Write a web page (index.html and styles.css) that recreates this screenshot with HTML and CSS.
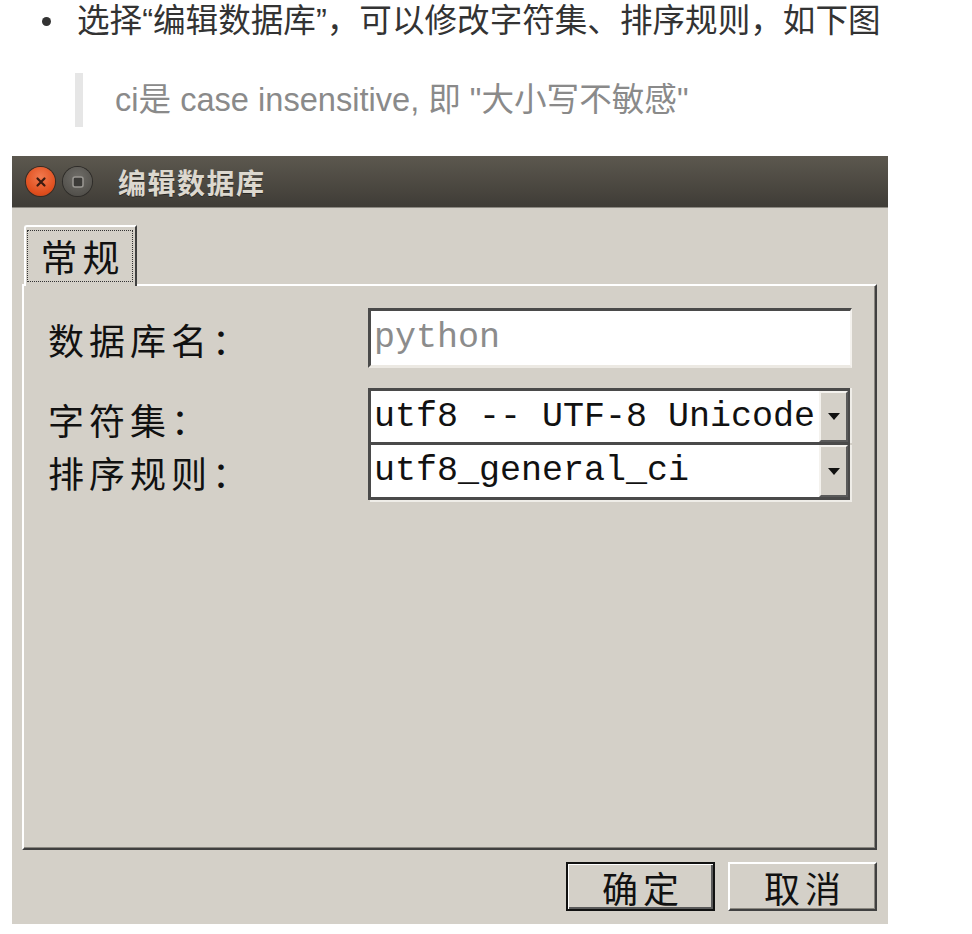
FILE: index.html
```html
<!DOCTYPE html>
<html lang="zh-CN">
<head>
<meta charset="utf-8">
<title>编辑数据库</title>
<link rel="stylesheet" href="styles.css">
</head>
<body>
<div class="lead">
  <span class="dot"></span>
  <span class="lead-text">选择“编辑数据库”，可以修改字符集、排序规则，如下图</span>
</div>
<blockquote class="quote">ci是 case insensitive, 即 "大小写不敏感"</blockquote>

<div class="dialog">
  <div class="titlebar">
    <span class="wbtn wbtn-close">
      <svg width="14" height="14" viewBox="0 0 14 14"><path d="M3.5 3.5 L10.5 10.5 M10.5 3.5 L3.5 10.5" stroke="#3a1a10" stroke-width="2.2" stroke-linecap="round"/></svg>
    </span>
    <span class="wbtn wbtn-max">
      <svg width="14" height="14" viewBox="0 0 14 14"><rect x="2" y="2" width="10" height="10" rx="2" fill="#3c3b38" stroke="#9a9893" stroke-width="1.5"/></svg>
    </span>
    <span class="title">编辑数据库</span>
  </div>
  <div class="dlg-body">
    <div class="tabs">
      <div class="tab"><span class="tab-focus">常规</span></div>
    </div>
    <div class="panel">
      <div class="form">
        <div class="label row1">数据库名：</div>
        <div class="field input row1"><span class="ph">python</span></div>
        <div class="label row2">字符集：</div>
        <div class="field combo row2">
          <span class="combo-text">utf8 -- UTF-8 Unicode</span>
          <span class="drop"><span class="tri"></span></span>
        </div>
        <div class="label row3">排序规则：</div>
        <div class="field combo combo2 row3">
          <span class="combo-text">utf8_general_ci</span>
          <span class="drop"><span class="tri"></span></span>
        </div>
      </div>
    </div>
    <div class="buttons">
      <div class="btn btn-default"><span class="btn-inner">确定</span></div>
      <div class="btn"><span class="btn-inner">取消</span></div>
    </div>
  </div>
</div>
</body>
</html>
```

FILE: styles.css
```css
html, body {
  margin: 0;
  padding: 0;
  background: #ffffff;
}
body {
  width: 972px;
  height: 934px;
  overflow: hidden;
  font-family: "Liberation Sans", "Noto Sans CJK SC", sans-serif;
}

.lead {
  display: flex;
  align-items: center;
  height: 42px;
  color: #333333;
  font-size: 32.6px;
}
.dot {
  width: 9px;
  height: 9px;
  border-radius: 50%;
  background: #333333;
  margin-left: 42px;
  margin-right: 26px;
}
.lead-text {
  line-height: 42px;
  white-space: nowrap;
}

.quote {
  margin: 31px 0 0 75px;
  padding: 0 0 0 32px;
  border-left: 8px solid #e6e6e6;
  height: 54px;
  line-height: 54px;
  font-size: 32.6px;
  color: #8a8a8a;
  white-space: nowrap;
}

.dialog {
  margin: 29px 0 0 12px;
  width: 876px;
  height: 768px;
  background: #d4d0c8;
  display: flex;
  flex-direction: column;
}

.titlebar {
  height: 51px;
  border-bottom: 1px solid #8c8982;
  background: linear-gradient(#5c584f, #3f3c36);
  display: flex;
  align-items: center;
  padding-left: 14px;
  box-sizing: content-box;
}
.wbtn {
  width: 29px;
  height: 29px;
  border-radius: 50%;
  display: flex;
  align-items: center;
  justify-content: center;
}
.wbtn-close {
  background: radial-gradient(circle at 50% 35%, #f27a4f, #df4d1c 70%, #b33d14);
  box-shadow: 0 0 0 1px #3a2a22;
}
.wbtn-max {
  margin-left: 8px;
  background: radial-gradient(circle at 50% 35%, #6f6d68, #55534e 70%, #45433f);
  box-shadow: 0 0 0 1px #2e2c29;
}
.title {
  margin-left: 26px;
  font-family: "Noto Sans CJK SC", sans-serif;
  font-weight: 700;
  font-size: 28px;
  color: #dcd8cf;
  letter-spacing: 1.5px;
  text-shadow: 0 1px 0 #2a2825;
}

.dlg-body {
  flex: 1;
  display: flex;
  flex-direction: column;
  padding: 17px 11px 13px 10px;
}

.tabs {
  display: flex;
  padding-left: 2px;
  height: 59px;
  position: relative;
  z-index: 1;
}
.tab {
  width: 113px;
  height: 61px;
  background: #d4d0c8;
  border-top: 2px solid #ffffff;
  border-left: 2px solid #ffffff;
  border-right: 2px solid #404040;
  border-top-left-radius: 3px;
  box-sizing: border-box;
  padding: 3px 2px 3px 1px;
}
.tab-focus {
  display: flex;
  align-items: center;
  justify-content: center;
  height: 52px;
  border: 1px dotted #333333;
  font-family: "Noto Sans CJK SC", sans-serif;
  font-size: 37px;
  letter-spacing: 5px;
  padding-left: 5px;
  color: #111111;
  box-sizing: border-box;
}

.panel {
  height: 566px;
  box-sizing: border-box;
  border-top: 2px solid #ffffff;
  border-left: 2px solid #ffffff;
  border-right: 2px solid #404040;
  border-bottom: 2px solid #404040;
  box-shadow: inset -1px -1px 0 #8a8780;
  padding: 22px 23px 0 24px;
}

.form {
  display: grid;
  grid-template-columns: 320px 484px;
  grid-template-rows: 60px 20px 55px 57px;
}
.row1 { grid-row: 1; }
.row2 { grid-row: 3; }
.row3 { grid-row: 4; }

.label {
  grid-column: 1;
  display: flex;
  align-items: center;
  font-family: "Noto Sans CJK SC", sans-serif;
  font-size: 36px;
  letter-spacing: 5px;
  color: #111111;
  white-space: nowrap;
}
.row1.label { padding-top: 2px; }
.row2.label { padding-top: 6px; }

.field {
  grid-column: 2;
  box-sizing: border-box;
  background: #ffffff;
  font-family: "Liberation Mono", monospace;
  font-size: 35px;
  display: flex;
  align-items: center;
  overflow: hidden;
  white-space: nowrap;
}
.input {
  border-top: 3px solid #4a4a4a;
  border-left: 3px solid #4a4a4a;
  border-right: 2px solid #f4f2ee;
  border-bottom: 3px solid #ece9e3;
  padding-left: 3px;
}
.ph {
  color: #8c8c8c;
}
.combo {
  border-top: 3px solid #4a4a4a;
  border-left: 3px solid #4a4a4a;
  border-right: 2px solid #4a4a4a;
  border-bottom: 1px solid #4a4a4a;
  margin-right: 2px;
  padding-left: 3px;
  color: #111111;
  box-shadow: 2px 0 0 #efede8;
}
.combo2 {
  border-top: 2px solid #4a4a4a;
  border-bottom: 3px solid #4a4a4a;
  box-shadow: 2px 2px 0 #efede8;
}
.combo-text {
  flex: 1;
  min-width: 0;
}
.drop {
  align-self: stretch;
  width: 29px;
  flex: 0 0 29px;
  box-sizing: border-box;
  background: #d4d0c8;
  border-top: 2px solid #f4f2ee;
  border-left: 2px solid #f4f2ee;
  border-right: 2px solid #5a5a5a;
  border-bottom: 2px solid #5a5a5a;
  display: flex;
  align-items: center;
  justify-content: center;
}
.tri {
  width: 0;
  height: 0;
  border-left: 6px solid transparent;
  border-right: 6px solid transparent;
  border-top: 7px solid #111111;
}

.buttons {
  margin-top: 12px;
  display: flex;
  justify-content: flex-end;
  gap: 13px;
}
.btn {
  width: 149px;
  height: 49px;
  box-sizing: border-box;
  border-top: 2px solid #ffffff;
  border-left: 2px solid #ffffff;
  border-right: 2px solid #404040;
  border-bottom: 2px solid #404040;
  box-shadow: inset -1px -1px 0 #8a8780;
  display: flex;
}
.btn-default {
  border: 2px solid #111111;
  box-shadow: inset 1px 1px 0 #ffffff, inset -2px -2px 0 #5a5a5a;
}
.btn-inner {
  flex: 1;
  display: flex;
  align-items: center;
  justify-content: center;
  font-family: "Noto Sans CJK SC", sans-serif;
  font-size: 36px;
  letter-spacing: 5px;
  padding-left: 5px;
  color: #111111;
}
```
